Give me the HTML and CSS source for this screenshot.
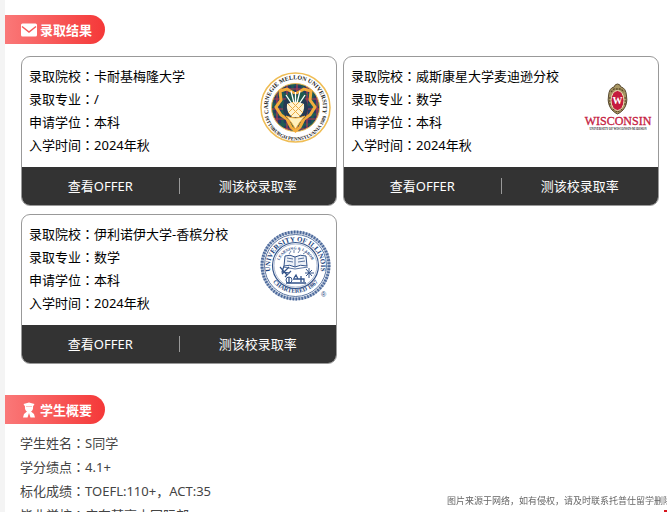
FILE: index.html
```html
<!DOCTYPE html>
<html lang="zh-CN">
<head>
    <meta charset="UTF-8">
    <meta name="viewport" content="width=device-width, initial-scale=1.0">
    <title>录取结果</title>
    <link rel="stylesheet" href="styles.css">
</head>
<body>
    <main>
        <section>
            <h2 class="tab">
                <svg class="tab-icon" viewBox="0 0 16 16">
                    <rect x="0" y="1.500" width="16" height="13" rx="1.500" fill="#fff"/>
                    <path d="M1 4.500L8 10L15 4.500" fill="none" stroke="#f65a5a" stroke-width="1.500"/>
                </svg>
                录取结果
            </h2>
            <div class="offers">
                <article class="card">
                    <div class="card-body">
                        <ul class="card-info">
                            <li>录取院校<span class="mark" lang="zh-TW">：</span>卡耐基梅隆大学</li>
                            <li>录取专业<span class="mark" lang="zh-TW">：</span>/</li>
                            <li>申请学位<span class="mark" lang="zh-TW">：</span>本科</li>
                            <li>入学时间<span class="mark" lang="zh-TW">：</span>2024年秋</li>
                        </ul>
                        <svg class="school-logo" viewBox="0 0 71 71">
                            <defs>
                                <pattern id="tartan" width="10" height="10" patternUnits="userSpaceOnUse">
                                    <rect width="10" height="10" fill="#263a63"/>
                                    <path d="M0 2.500H10M2.500 0V10" stroke="#1c6450" stroke-width="2.500" opacity=".8"/>
                                    <path d="M0 7H10M7 0V10" stroke="#b53b4d" stroke-width="1.200"/>
                                </pattern>
                                <path id="cmu-top" d="M8.500 40A27.500 27.500 0 1 1 62.500 40"/>
                                <path id="cmu-bottom" d="M4 37A31.500 31.500 0 0 0 67 37"/>
                            </defs>
                            <circle cx="35.500" cy="35.500" r="34.500" fill="#fff" stroke="#efbd55" stroke-width="1.500"/>
                            <circle cx="35.500" cy="35.500" r="24" fill="url(#tartan)" stroke="#efbd55"/>
                            <path d="M20 19L27 17L35.500 22L44 17L51 19L50 28L55 35L50 43L44 47L40 55L35.500 59L31 55L27 47L21 43L16 35L21 28Z" fill="none" stroke="#f3ad3c" stroke-width="3"/>
                            <ellipse cx="35.500" cy="36" rx="12.500" ry="14" fill="#263a52"/>
                            <path d="M24 22Q28 31 35.500 33Q43 31 47 22L43 23L40 20L35.500 24L31 20L28 23Z" fill="#1f5a4c"/>
                            <path d="M26 23L32 32M31 19L34 31M35.500 20V31M40 19L37 31M45 23L39 32" stroke="#fff" stroke-width="1.300"/>
                            <path d="M27 32Q35.500 28 44 32Q45 40 39 45H32Q26 40 27 32Z" fill="#fff3cf"/>
                            <path d="M28 32L40 44M32 30L43 41M43 32L31 44M39 30L28 41" stroke="#e9aa42"/>
                            <path d="M26 44Q35.500 48 45 44L40 50L35.500 57L31 50Z" fill="#fff0bd" stroke="#f3ad3c"/>
                            <text class="cmu-text"><textPath href="#cmu-top" startOffset="50%">CARNEGIE MELLON UNIVERSITY</textPath></text>
                            <text class="cmu-text cmu-small"><textPath href="#cmu-bottom" startOffset="50%">PITTSBURGH PENNSYLVANIA 1900</textPath></text>
                        </svg>
                    </div>
                    <div class="card-foot">
                        <a href="#">查看OFFER</a>
                        <a href="#">测该校录取率</a>
                    </div>
                </article>
                <article class="card">
                    <div class="card-body">
                        <ul class="card-info">
                            <li>录取院校<span class="mark" lang="zh-TW">：</span>威斯康星大学麦迪逊分校</li>
                            <li>录取专业<span class="mark" lang="zh-TW">：</span>数学</li>
                            <li>申请学位<span class="mark" lang="zh-TW">：</span>本科</li>
                            <li>入学时间<span class="mark" lang="zh-TW">：</span>2024年秋</li>
                        </ul>
                        <svg class="school-logo" viewBox="0 0 71 71">
                            <path d="M35.500 12Q38 12 39 15Q44 16 44.500 24Q46 32 41 38Q38 41 35.500 42Q33 41 30 38Q25 32 26.500 24Q27 16 32 15Q33 12 35.500 12Z" fill="#a99763" stroke="#57482f"/>
                            <path d="M29 20L32 17H39L42 20M28 25V33M43 25V33M31 37L35.500 40L40 37" fill="none" stroke="#5d4c2d" stroke-width="1.300" stroke-dasharray="2 1"/>
                            <ellipse cx="35.500" cy="28.500" rx="6.500" ry="10" fill="#c51c3e" stroke="#efe4bd"/>
                            <text class="wis-crest" x="35.500" y="32">W</text>
                            <text class="wis-name" x="36" y="53">WISCONSIN</text>
                            <text class="wis-sub" x="36" y="58">UNIVERSITY OF WISCONSIN-MADISON</text>
                        </svg>
                    </div>
                    <div class="card-foot">
                        <a href="#">查看OFFER</a>
                        <a href="#">测该校录取率</a>
                    </div>
                </article>
                <article class="card">
                    <div class="card-body">
                        <ul class="card-info">
                            <li>录取院校<span class="mark" lang="zh-TW">：</span>伊利诺伊大学-香槟分校</li>
                            <li>录取专业<span class="mark" lang="zh-TW">：</span>数学</li>
                            <li>申请学位<span class="mark" lang="zh-TW">：</span>本科</li>
                            <li>入学时间<span class="mark" lang="zh-TW">：</span>2024年秋</li>
                        </ul>
                        <svg class="school-logo" viewBox="0 0 71 71">
                            <defs>
                                <path id="ill-top" d="M10.500 42A25.500 25.500 0 1 1 60.500 42"/>
                                <path id="ill-bottom" d="M8 43A29 29 0 0 0 63 43"/>
                                <path id="ill-motto" d="M18 37A17.500 17.500 0 0 1 53 37"/>
                            </defs>
                            <circle cx="35.500" cy="35.500" r="33.500" fill="#fff" stroke="#a9b8d0" stroke-width="3"/>
                            <circle cx="35.500" cy="35.500" r="33.500" fill="none" stroke="#4a679a" stroke-width="3" stroke-dasharray="1.500 1.500"/>
                            <circle cx="35.500" cy="35.500" r="31" fill="none" stroke="#34548a" stroke-width=".8"/>
                            <circle cx="35.500" cy="35.500" r="23" fill="none" stroke="#34548a" stroke-width="1.200"/>
                            <circle cx="35.500" cy="35.500" r="21.500" fill="none" stroke="#7c91b6" stroke-width=".6"/>
                            <g fill="none" stroke="#34548a">
                                <path d="M25 26Q30 24 35 27Q40 24 46 26L47 36Q40 34 35 37Q30 34 24 36Z" fill="#eef2f8"/>
                                <path d="M35 27V37M27 28L33 29M27 31L33 32M38 29L44 28M38 32L45 31M23 37L35 39L48 37" stroke-width=".8"/>
                                <path d="M29 24L31 21M34 23V20M38 23L40 20M43 24L46 22" stroke-width=".7"/>
                                <path d="M20 37L27 45M22 44L29 37M24 36L22 42L30 43M25 47L31 41" stroke-width="1.200"/>
                                <path d="M45 43H54M49 38V48M46 39L52 46M52 40L46 46"/>
                                <circle cx="29" cy="50" r="3"/>
                                <path d="M26 53H46M33 49H44V52M34 48L36 45L38 49M41 46V52M29 47V53" stroke-width="1.300"/>
                            </g>
                            <text class="ill-text"><textPath href="#ill-top" startOffset="50%">UNIVERSITY OF ILLINOIS</textPath></text>
                            <text class="ill-text ill-small"><textPath href="#ill-bottom" startOffset="50%">CHARTERED 1867</textPath></text>
                            <text class="ill-text ill-motto"><textPath href="#ill-motto" startOffset="50%">LEARNING &amp; LABOR</textPath></text>
                            <text class="ill-reg" x="61" y="67">®</text>
                        </svg>
                    </div>
                    <div class="card-foot">
                        <a href="#">查看OFFER</a>
                        <a href="#">测该校录取率</a>
                    </div>
                </article>
            </div>
        </section>
        <section>
            <h2 class="tab">
                <svg class="tab-icon" viewBox="0 0 16 16">
                    <path d="M2.500 2L8 .5L13.500 2L12 4.500Q12.500 8 10 9.500L13 12L14 15.500H9.500L8 11L6.500 15.500H2L3 12L6 9.500Q3.500 8 4 4.500Z" fill="#fff"/>
                    <path d="M5 4.500H11" stroke="#fba5a5" stroke-width=".7"/>
                </svg>
                学生概要
            </h2>
            <ul class="summary">
                <li>学生姓名<span class="mark" lang="zh-TW">：</span>S同学</li>
                <li>学分绩点<span class="mark" lang="zh-TW">：</span>4.1+</li>
                <li>标化成绩<span class="mark" lang="zh-TW">：</span>TOEFL:110+，ACT:35</li>
                <li>毕业学校<span class="mark" lang="zh-TW">：</span>广东某高中国际部</li>
            </ul>
        </section>
    </main>
    <p class="notice">图片来源于网络，如有侵权，请及时联系托普仕留学删除</p>
    <div class="corner"></div>
</body>
</html>
```
FILE: styles.css
```css
* {
    margin: 0;
    padding: 0;
    box-sizing: border-box;
}

html {
    overflow: hidden;
}

body {
    height: 100vh;
    overflow: hidden;
    background-color: #f4f4f4;
    color: #000;
    font-family: "Noto Sans", "Noto Sans CJK SC", sans-serif;
    font-size: 13px;
    padding-left: 5px;
}

main {
    min-height: 100vh;
    background-color: #fff;
    padding-top: 15px;
}

ul {
    list-style: none;
}

/* centred colon */
.mark {
    font-family: "Noto Sans CJK TC", sans-serif;
    line-height: 1;
}

.tab {
    display: flex;
    align-items: center;
    gap: 3px;
    width: 100px;
    height: 29px;
    padding-left: 16px;
    border-radius: 0 15px 15px 0;
    background: linear-gradient(to right, #fa7878, #f53838);
    color: #fff;
    font-size: 13px;
    font-weight: bold;
    white-space: nowrap;
}

.tab-icon {
    width: 16px;
    height: 16px;
    flex: none;
}

.offers {
    display: grid;
    grid-template-columns: 1fr 1fr;
    gap: 8px 6px;
    padding: 12px 8px 31px 16px;
}

.card {
    border: 1px solid #999;
    border-radius: 9px;
    overflow: hidden;
}

.card-body {
    display: flex;
    justify-content: space-between;
    padding: 8px 5px 10px 7px;
}

.card-info {
    line-height: 23px;
    white-space: nowrap;
}

.school-logo {
    width: 71px;
    height: 71px;
    margin-top: 7px;
    flex: none;
}

.card-foot {
    display: flex;
    align-items: center;
    height: 38px;
    background-color: #333;
}

.card-foot a {
    flex: 1;
    line-height: 16px;
    text-align: center;
    color: #fff;
    text-decoration: none;
}

.card-foot a + a {
    border-left: 1px solid #999;
}

.summary {
    padding: 7px 15px;
    color: #444;
    line-height: 24px;
}

.notice {
    position: fixed;
    left: calc(100% - 220px);
    bottom: 4px;
    color: #666;
    font-size: 9px;
    line-height: 14px;
    white-space: nowrap;
}

.corner {
    position: fixed;
    right: 0;
    bottom: 0;
    width: 3px;
    height: 2px;
    background-color: #d8141c;
}

/* school logos */
.cmu-text,
.ill-text,
.wis-crest,
.wis-name,
.wis-sub {
    font-family: "Liberation Serif", serif;
    font-weight: bold;
    text-anchor: middle;
}

.cmu-text {
    font-size: 6px;
    fill: #222;
}

.cmu-small {
    font-size: 5px;
}

.wis-crest {
    font-size: 10px;
    fill: #fff;
}

.wis-name {
    font-size: 12px;
    font-weight: normal;
    fill: #c5203f;
    stroke: #c5203f;
    stroke-width: 0.3px;
}

.wis-sub {
    font-size: 3px;
    fill: #333;
}

.ill-text {
    font-size: 7px;
    fill: #24457e;
}

.ill-small {
    font-size: 6px;
}

.ill-motto {
    font-size: 4px;
}

.ill-reg {
    font-family: "Liberation Sans", sans-serif;
    font-size: 7px;
    fill: #24457e;
}
```
